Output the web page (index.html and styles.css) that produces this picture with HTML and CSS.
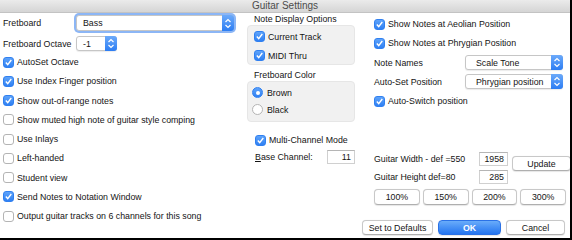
FILE: index.html
```html
<!DOCTYPE html>
<html>
<head>
<meta charset="UTF-8">
<title>Guitar Settings</title>
<link rel="stylesheet" href="styles.css">
</head>
<body>
<div class="window">
	<div class="titlebar">Guitar Settings</div>
	<div class="content">

		<div class="col-left">
			<div class="field field-fretboard">
				<span class="lbl">Fretboard</span>
				<div class="popup popup-wide focus"><span class="val">Bass</span><span class="stepper"><svg width="8" height="11" viewBox="0 0 8 11"><path d="M1.5 4 L4 1.5 L6.5 4 M1.5 7 L4 9.5 L6.5 7" fill="none" stroke="#fff" stroke-width="1.2"/></svg></span></div>
			</div>
			<div class="field field-octave">
				<span class="lbl">Fretboard Octave</span>
				<div class="popup popup-small"><span class="val">-1</span><span class="stepper"><svg width="8" height="11" viewBox="0 0 8 11"><path d="M1.5 4 L4 1.5 L6.5 4 M1.5 7 L4 9.5 L6.5 7" fill="none" stroke="#fff" stroke-width="1.2"/></svg></span></div>
			</div>
			<div class="checks">
				<div class="chk"><span class="box on"><svg width="9" height="9" viewBox="0 0 9 9"><path d="M1.8 4.6 L3.7 6.6 L7.3 2" fill="none" stroke="#fff" stroke-width="1.4"/></svg></span>AutoSet Octave</div>
				<div class="chk"><span class="box on"><svg width="9" height="9" viewBox="0 0 9 9"><path d="M1.8 4.6 L3.7 6.6 L7.3 2" fill="none" stroke="#fff" stroke-width="1.4"/></svg></span>Use Index Finger position</div>
				<div class="chk"><span class="box on"><svg width="9" height="9" viewBox="0 0 9 9"><path d="M1.8 4.6 L3.7 6.6 L7.3 2" fill="none" stroke="#fff" stroke-width="1.4"/></svg></span>Show out-of-range notes</div>
				<div class="chk"><span class="box"></span>Show muted high note of guitar style comping</div>
				<div class="chk"><span class="box"></span>Use Inlays</div>
				<div class="chk"><span class="box"></span>Left-handed</div>
				<div class="chk"><span class="box"></span>Student view</div>
				<div class="chk"><span class="box on"><svg width="9" height="9" viewBox="0 0 9 9"><path d="M1.8 4.6 L3.7 6.6 L7.3 2" fill="none" stroke="#fff" stroke-width="1.4"/></svg></span>Send Notes to Notation Window</div>
				<div class="chk"><span class="box"></span>Output guitar tracks on 6 channels for this song</div>
			</div>
		</div>

		<div class="col-mid">
			<div class="group-title">Note Display Options</div>
			<div class="group group-notes">
				<div class="chk"><span class="box on"><svg width="9" height="9" viewBox="0 0 9 9"><path d="M1.8 4.6 L3.7 6.6 L7.3 2" fill="none" stroke="#fff" stroke-width="1.4"/></svg></span>Current Track</div>
				<div class="chk"><span class="box on"><svg width="9" height="9" viewBox="0 0 9 9"><path d="M1.8 4.6 L3.7 6.6 L7.3 2" fill="none" stroke="#fff" stroke-width="1.4"/></svg></span>MIDI Thru</div>
			</div>
			<div class="group-title second">Fretboard Color</div>
			<div class="group group-color">
				<div class="chk"><span class="radio on"></span>Brown</div>
				<div class="chk"><span class="radio"></span>Black</div>
			</div>
			<div class="chk multi"><span class="box on"><svg width="9" height="9" viewBox="0 0 9 9"><path d="M1.8 4.6 L3.7 6.6 L7.3 2" fill="none" stroke="#fff" stroke-width="1.4"/></svg></span>Multi-Channel Mode</div>
			<div class="field base">
				<span class="lbl"><u>B</u>ase Channel:</span>
				<span class="num num-base">11</span>
			</div>
		</div>

		<div class="col-right">
			<div class="right-top">
				<div class="chk"><span class="box on"><svg width="9" height="9" viewBox="0 0 9 9"><path d="M1.8 4.6 L3.7 6.6 L7.3 2" fill="none" stroke="#fff" stroke-width="1.4"/></svg></span>Show Notes at Aeolian Position</div>
				<div class="chk"><span class="box on"><svg width="9" height="9" viewBox="0 0 9 9"><path d="M1.8 4.6 L3.7 6.6 L7.3 2" fill="none" stroke="#fff" stroke-width="1.4"/></svg></span>Show Notes at Phrygian Position</div>
				<div class="field field-right">
					<span class="lbl">Note Names</span>
					<div class="popup popup-right"><span class="val">Scale Tone</span><span class="stepper"><svg width="8" height="11" viewBox="0 0 8 11"><path d="M1.5 4 L4 1.5 L6.5 4 M1.5 7 L4 9.5 L6.5 7" fill="none" stroke="#fff" stroke-width="1.2"/></svg></span></div>
				</div>
				<div class="field field-right">
					<span class="lbl">Auto-Set Position</span>
					<div class="popup popup-right"><span class="val">Phrygian position</span><span class="stepper"><svg width="8" height="11" viewBox="0 0 8 11"><path d="M1.5 4 L4 1.5 L6.5 4 M1.5 7 L4 9.5 L6.5 7" fill="none" stroke="#fff" stroke-width="1.2"/></svg></span></div>
				</div>
				<div class="chk"><span class="box on"><svg width="9" height="9" viewBox="0 0 9 9"><path d="M1.8 4.6 L3.7 6.6 L7.3 2" fill="none" stroke="#fff" stroke-width="1.4"/></svg></span>Auto-Switch position</div>
			</div>

			<div class="size-grid">
				<span class="lbl">Guitar Width - def =550</span>
				<span class="num">1958</span>
				<span class="btn btn-update">Update</span>
				<span class="lbl">Guitar Height def=80</span>
				<span class="num">285</span>
			</div>

			<div class="pct-row">
				<span class="btn">100%</span>
				<span class="btn">150%</span>
				<span class="btn">200%</span>
				<span class="btn">300%</span>
			</div>

			<div class="footer">
				<span class="btn btn-defaults">Set to Defaults</span>
				<span class="btn btn-ok">OK</span>
				<span class="btn btn-cancel">Cancel</span>
			</div>
		</div>

	</div>
</div>
</body>
</html>
```

FILE: styles.css
```css
html, body{
	margin:0;
	background:#000;
}

body{
	font: 8.8px "Liberation Sans", Arial, Helvetica, sans-serif;
	color:#141414;
}

.window{
	width:570px;
	height:238px;
	background:#fff;
	overflow:hidden;
}

.titlebar{
	height:12px;
	line-height:12px;
	text-align:center;
	font-size:10px;
	color:#4c4c4c;
	background:linear-gradient(to bottom, #ebebeb, #d5d5d5);
	border-bottom:1px solid #c3c3c3;
}

.content{
	display:flex;
	height:225px;
}

/* colonnes */
.col-left{
	width:244px;
	padding-left:3px;
}
.col-mid{
	width:108px;
}
.col-right{
	width:208px;
	margin-left:7px;
	display:flex;
	flex-direction:column;
}

.field{
	display:flex;
	align-items:center;
	white-space:nowrap;
}
.field-fretboard{
	height:20px;
}
.field-octave{
	height:15px;
	margin-top:3px;
}
.field-fretboard .lbl, .field-octave .lbl{
	width:73px;
}

/* menus deroulants */
.popup{
	display:flex;
	align-items:center;
	height:15px;
	box-sizing:border-box;
	border:1px solid #c6c6c6;
	border-radius:3px;
	background:#fff;
	box-shadow:0 1px 1px rgba(0,0,0,0.08);
}
.popup .val{
	flex:1;
	padding-left:6px;
}
.stepper{
	align-self:stretch;
	width:12px;
	margin:-1px -1px -1px 0;
	border-radius:0 3px 3px 0;
	background:linear-gradient(to bottom, #6caafa, #2c7df3);
	display:flex;
	align-items:center;
	justify-content:center;
}
.popup-wide{
	width:158px;
	height:16px;
}
.focus{
	box-shadow:0 0 0 2px #8cb6f5;
}
.popup-small{
	width:41px;
}

/* cases a cocher */
.checks{
	margin-top:1.4px;
}
.chk{
	display:flex;
	align-items:center;
	height:19.25px;
	white-space:nowrap;
}
.box, .radio{
	width:11px;
	height:11px;
	box-sizing:border-box;
	border:1px solid #b4b4b4;
	border-radius:3px;
	background:#fff;
	margin-right:3px;
	flex:none;
	display:flex;
	align-items:center;
	justify-content:center;
}
.box.on, .radio.on{
	border-color:#3080f0;
	background:linear-gradient(to bottom, #5ea3fa, #2f80f3);
}
.radio{
	border-radius:50%;
	margin-right:4px;
}
.radio.on::after{
	content:"";
	width:4px;
	height:4px;
	border-radius:50%;
	background:#fff;
}

/* colonne du milieu */
.group-title{
	height:10px;
	line-height:10px;
	margin:1px 0 1px 7px;
}
.group-title.second{
	margin-top:5px;
}
.group{
	box-sizing:border-box;
	background:#f1f1f1;
	border:1px solid #e6e6e6;
	border-radius:4px;
}
.group-notes{
	height:40px;
	padding:1px 0 0 6px;
}
.group-notes .chk{
	height:19px;
}
.group-color{
	height:41px;
	padding:2px 0 0 4px;
}
.group-color .chk{
	height:17px;
}
.multi{
	height:19px;
	margin:8.5px 0 0 8px;
}
.base{
	height:14px;
	margin:0.5px 0 0 8px;
	justify-content:space-between;
}

.num{
	display:flex;
	align-items:center;
	justify-content:flex-end;
	box-sizing:border-box;
	height:14px;
	padding-right:3px;
	border:1px solid #d0d0d0;
	border-top-color:#b5b5b5;
	background:#fff;
}
.num-base{
	width:28px;
}

/* colonne de droite */
.right-top{
	padding:1.4px 0 0 12px;
}
.field-right{
	height:19.25px;
}
.field-right .lbl{
	width:91px;
}
.popup-right{
	width:98px;
}
.popup-right .val{
	padding-left:10px;
}

.size-grid{
	display:grid;
	grid-template-columns:101px 29px 59px;
	grid-template-rows:18px 18px;
	column-gap:4px;
	margin-top:39.4px;
	padding-left:12px;
	align-items:center;
}
.btn-update{
	grid-column:3;
	grid-row:1 / 3;
	align-self:start;
	margin-top:6px;
	height:15px;
}

.btn{
	display:flex;
	align-items:center;
	justify-content:center;
	box-sizing:border-box;
	border:1px solid #c8c8c8;
	border-bottom-color:#afafaf;
	border-radius:4px;
	background:#fff;
	box-shadow:0 0.5px 1px rgba(0,0,0,0.1);
	white-space:nowrap;
}

.pct-row{
	display:grid;
	grid-template-columns:repeat(4, 1fr);
	column-gap:3px;
	height:16px;
	margin-top:3px;
	padding:0 4px 0 12px;
}

.footer{
	display:flex;
	gap:5px;
	height:15px;
	margin-top:15px;
}
.btn-defaults{
	width:71px;
}
.btn-ok{
	width:63px;
	color:#fff;
	font-weight:bold;
	border-color:#2b72e6;
	background:linear-gradient(to bottom, #69acfa, #2475f0);
}
.btn-cancel{
	width:59px;
}
```
